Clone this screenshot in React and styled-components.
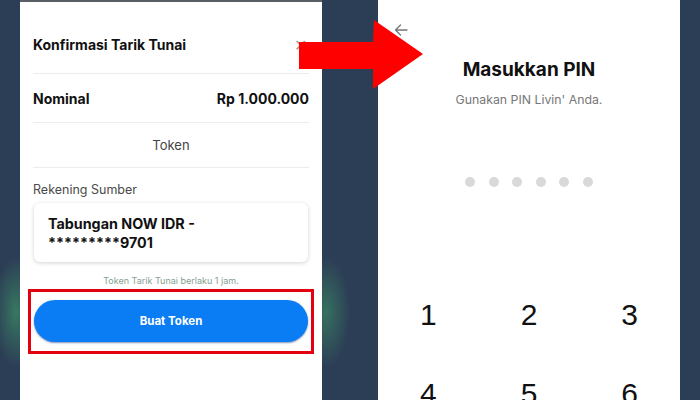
import styled, { createGlobalStyle } from "styled-components";

const GlobalStyle = createGlobalStyle`
  html, body {
    margin: 0;
    padding: 0;
    width: 700px;
    height: 400px;
    overflow: hidden;
    font-family: Inter, "Noto Sans", sans-serif;
  }
`;

const Page = styled.div`
  position: relative;
  width: 700px;
  height: 400px;
  display: flex;
  gap: 56px;
  padding-left: 20px;
  box-sizing: border-box;
  background:
    radial-gradient(ellipse 22px 55px at 16px 312px, rgba(70, 190, 110, 0.45), transparent),
    radial-gradient(ellipse 24px 55px at 326px 312px, rgba(70, 190, 110, 0.4), transparent),
    #2c3e56;
  overflow: hidden;
`;

const Phone = styled.div`
  width: 302px;
  height: 400px;
  background: #fff;
  box-sizing: border-box;
  display: flex;
  flex-direction: column;
  border-top: ${(p) => (p.$topline ? "2px solid #5a5f66" : "none")};
`;

/* left screen */
const Sheet = styled.div`
  padding: 0 13px;
  display: flex;
  flex-direction: column;
`;

const Header = styled.div`
  height: 72px;
  padding-top: 14px;
  box-sizing: border-box;
  display: flex;
  align-items: center;
  justify-content: space-between;
  border-bottom: 1px solid #ececec;
  font-size: 14px;
  font-weight: 700;
  color: #111;
`;

const Close = styled.span`
  color: #9a9a9a;
  font-size: 16px;
  font-weight: 300;
  margin-right: 2px;
`;

const Row = styled.div`
  height: ${(p) => p.$h}px;
  display: flex;
  align-items: center;
  justify-content: ${(p) => (p.$center ? "center" : "space-between")};
  border-bottom: 1px solid #ececec;
  font-size: ${(p) => (p.$bold ? 14 : 13)}px;
  font-weight: ${(p) => (p.$bold ? 700 : 400)};
  color: ${(p) => (p.$bold ? "#111" : "#444")};
`;

const Label = styled.div`
  margin-top: 14px;
  line-height: 16px;
  font-size: 12.5px;
  color: #4a4a4a;
`;

const AccountCard = styled.div`
  margin: 5px 1px 0;
  padding: 11px 14px 10px;
  border-radius: 6px;
  background: #fff;
  box-shadow: 0 1px 4px rgba(0, 0, 0, 0.18);
  font-size: 14.3px;
  font-weight: 700;
  line-height: 19px;
  color: #111;
`;

const Note = styled.div`
  margin-top: 14px;
  text-align: center;
  font-size: 9px;
  line-height: 10px;
  color: #86a08f;
`;

const Highlight = styled.div`
  margin: 3px -5px 0;
  padding: 8px 3px 9px;
  border: 3px solid #e3000f;
`;

const PrimaryButton = styled.button`
  width: 100%;
  height: 42px;
  border: none;
  border-radius: 21px;
  background: #0a7df5;
  box-shadow: 0 1px 2px rgba(0, 40, 120, 0.5);
  color: #fff;
  font-family: inherit;
  font-size: 11.5px;
  font-weight: 700;
`;

/* right screen */
const PinScreen = styled.div`
  display: flex;
  flex-direction: column;
  align-items: center;
`;

const BackBar = styled.div`
  align-self: stretch;
  height: 40px;
  padding: 20px 0 0 16px;
  box-sizing: border-box;
  color: #777;
`;

const Title = styled.h1`
  margin: 18px 0 0;
  font-size: 19px;
  line-height: 24px;
  font-weight: 700;
  color: #111;
`;

const Subtitle = styled.p`
  margin: 10px 0 0;
  font-size: 12.3px;
  line-height: 15px;
  color: #777;
`;

const Dots = styled.div`
  margin-top: 70px;
  display: flex;
  gap: 13.5px;
`;

const Dot = styled.span`
  width: 10px;
  height: 10px;
  border-radius: 50%;
  background: #d9d9d9;
`;

const Keypad = styled.div`
  align-self: stretch;
  margin-top: 112px;
  display: grid;
  grid-template-columns: repeat(3, 1fr);
  row-gap: 47px;
`;

const Key = styled.div`
  text-align: center;
  font-family: "Liberation Sans", Arial, sans-serif;
  font-size: 30px;
  line-height: 32px;
  color: #111;
`;

const Arrow = styled.svg`
  position: absolute;
  left: 299px;
  top: 19px;
`;

export default function App() {
  return (
    <>
      <GlobalStyle />
      <Page>
        <Phone $topline>
          <Sheet>
            <Header>
              Konfirmasi Tarik Tunai
              <Close>✕</Close>
            </Header>
            <Row $h={48} $bold>
              <span>Nominal</span>
              <span>Rp 1.000.000</span>
            </Row>
            <Row $h={44} $center>
              Token
            </Row>
            <Label>Rekening Sumber</Label>
            <AccountCard>
              Tabungan NOW IDR -
              <br />
              *********9701
            </AccountCard>
            <Note>Token Tarik Tunai berlaku 1 jam.</Note>
            <Highlight>
              <PrimaryButton>Buat Token</PrimaryButton>
            </Highlight>
          </Sheet>
        </Phone>

        <Phone>
          <PinScreen>
            <BackBar>
              <svg width="14" height="12" viewBox="0 0 14 12" fill="none" stroke="currentColor" strokeWidth="1.4" strokeLinecap="round" strokeLinejoin="round">
                <path d="M13 6H1.5M6.5 1L1.5 6l5 5" />
              </svg>
            </BackBar>
            <Title>Masukkan PIN</Title>
            <Subtitle>Gunakan PIN Livin' Anda.</Subtitle>
            <Dots>
              {[0, 1, 2, 3, 4, 5].map((i) => (
                <Dot key={i} />
              ))}
            </Dots>
            <Keypad>
              {["1", "2", "3", "4", "5", "6"].map((k) => (
                <Key key={k}>{k}</Key>
              ))}
            </Keypad>
          </PinScreen>
        </Phone>

        <Arrow width="126" height="72" viewBox="0 0 126 72">
          <polygon points="0,23 74,23 75,1 124,35 74,70 74,50 0,50" fill="#ff0000" />
        </Arrow>
      </Page>
    </>
  );
}
